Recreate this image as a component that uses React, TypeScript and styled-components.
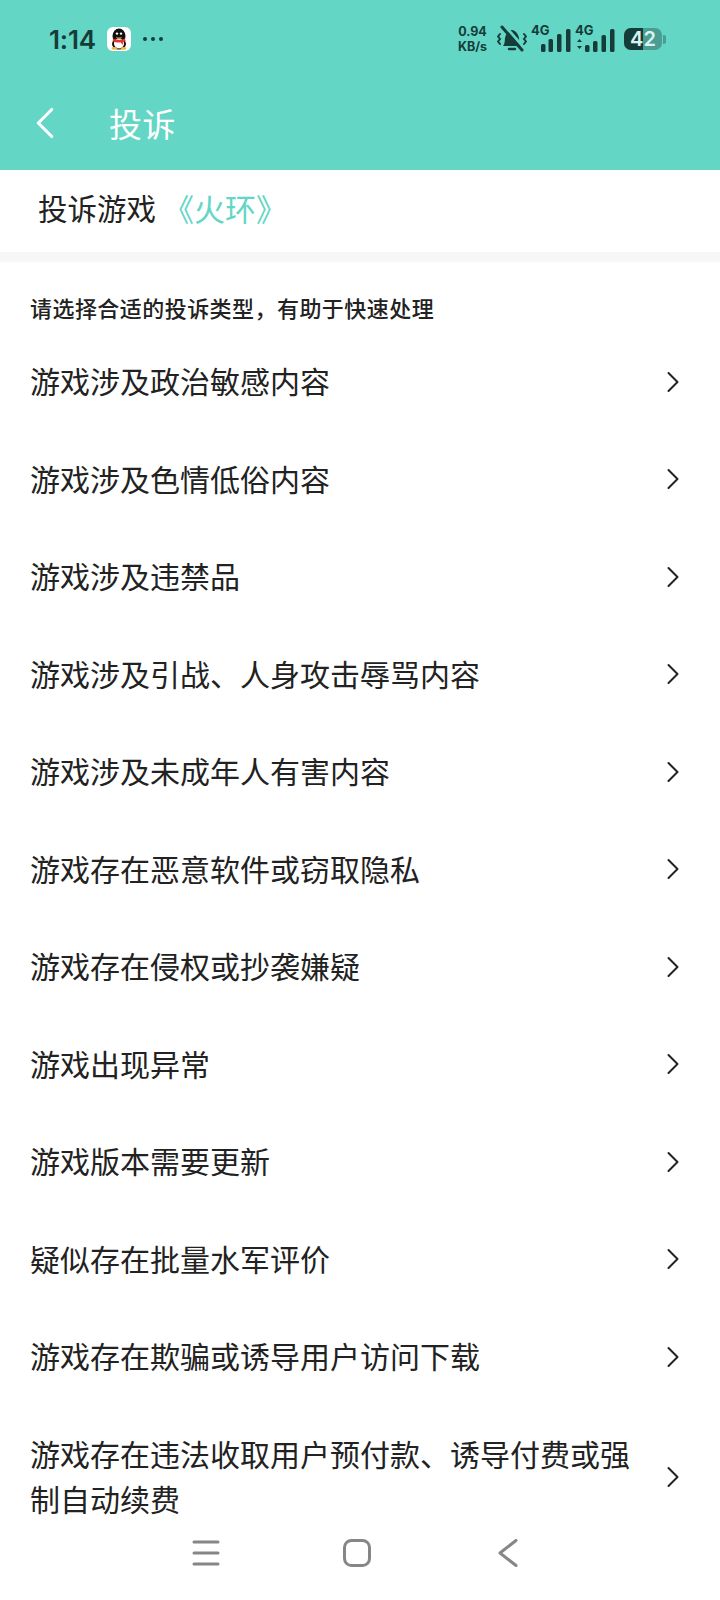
import styled, { createGlobalStyle } from "styled-components";
import { ChevronLeft, ChevronRight } from "lucide-react";

const GlobalStyle = createGlobalStyle`
  html, body {
    margin: 0;
    padding: 0;
    background: #fff;
  }
  * {
    box-sizing: border-box;
  }
`;

const cjk = `"Noto Sans CJK SC", "Noto Sans", sans-serif`;

const Screen = styled.main`
  display: flex;
  flex-direction: column;
  width: 720px;
  height: 1600px;
  overflow: hidden;
  background: #fff;
  font-family: ${cjk};
`;

const Header = styled.header`
  flex: none;
  height: 170px;
  background: #64d6c5;
  color: #fff;
`;

const StatusBar = styled.div`
  display: flex;
  align-items: center;
  justify-content: space-between;
  height: 78px;
  padding: 0 54px 0 49px;
  color: #163c3a;
`;

const StatusLeft = styled.div`
  display: flex;
  align-items: center;
`;

const Clock = styled.span`
  font-family: Inter, sans-serif;
  font-size: 26px;
  font-weight: 600;
  letter-spacing: -0.2px;
  width: 58px;
`;

const AppBadge = styled.span`
  display: flex;
  align-items: center;
  justify-content: center;
  width: 24px;
  height: 24px;
  border-radius: 6px;
  background: #fff;
`;

const Dots = styled.span`
  display: flex;
  gap: 4px;
  margin-left: 12px;
`;

const Dot = styled.i`
  width: 4px;
  height: 4px;
  border-radius: 50%;
  background: #163c3a;
`;

const StatusRight = styled.div`
  display: flex;
  align-items: center;
`;

const Speed = styled.span`
  display: flex;
  flex-direction: column;
  align-items: center;
  width: 31px;
  margin-right: 9px;
  font-family: Inter, sans-serif;
  font-size: 12.5px;
  font-weight: 700;
  line-height: 15px;
  white-space: nowrap;
`;

const Battery = styled.span`
  position: relative;
  display: flex;
  align-items: center;
  justify-content: center;
  width: 38px;
  height: 22px;
  margin-left: 9px;
  border-radius: 7px;
  overflow: hidden;
  background: #4b9c92;
  font-family: Inter, sans-serif;
  font-size: 20px;
  font-weight: 600;
  color: #d8f3ee;
`;

const BatteryFill = styled.i`
  position: absolute;
  left: 0;
  top: 0;
  bottom: 0;
  background: #163c3a;
`;

const BatteryLabel = styled.span`
  position: relative;
`;

const BatteryCap = styled.i`
  width: 3px;
  height: 9px;
  margin-left: 1px;
  border-radius: 0 2px 2px 0;
  background: #4b9c92;
`;

const TitleBar = styled.div`
  display: flex;
  align-items: center;
  height: 92px;
  padding: 0 0 2px 18px;
`;

const BackButton = styled.span`
  display: flex;
  width: 91px;
`;

const Title = styled.h1`
  margin: 0;
  font-size: 33px;
  font-weight: 400;
  letter-spacing: 0.5px;
`;

const GameRow = styled.div`
  flex: none;
  display: flex;
  align-items: center;
  height: 92px;
  padding: 0 0 8px 38px;
  border-bottom: 10px solid #f7f7f7;
  font-size: 29.5px;
  color: #222;
`;

const GameName = styled.span`
  margin-left: 7px;
  font-size: 31px;
  color: #64d6c5;
`;

const Hint = styled.p`
  flex: none;
  margin: 0;
  padding: 30px 30px 0;
  font-size: 22px;
  line-height: 30px;
  font-weight: 500;
  letter-spacing: 0.45px;
  color: #222;
`;

const List = styled.ul`
  flex: 1;
  min-height: 0;
  margin: 0;
  padding: 10px 0 0;
  list-style: none;
`;

const Item = styled.li`
  display: flex;
  align-items: center;
  justify-content: space-between;
  padding: 26.25px 29px 26.25px 30px;
  font-size: 30px;
  line-height: 45px;
  color: #222;
`;

const ItemText = styled.span`
  max-width: 600px;
`;

const ItemArrow = styled(ChevronRight)`
  flex: none;
  margin-top: 2px;
  color: #222;
`;

const NavBar = styled.nav`
  flex: none;
  display: flex;
  align-items: center;
  justify-content: center;
  gap: 123px;
  height: 94px;
  padding-right: 6px;
  color: #868686;
`;

const items = [
  "游戏涉及政治敏感内容",
  "游戏涉及色情低俗内容",
  "游戏涉及违禁品",
  "游戏涉及引战、人身攻击辱骂内容",
  "游戏涉及未成年人有害内容",
  "游戏存在恶意软件或窃取隐私",
  "游戏存在侵权或抄袭嫌疑",
  "游戏出现异常",
  "游戏版本需要更新",
  "疑似存在批量水军评价",
  "游戏存在欺骗或诱导用户访问下载",
  "游戏存在违法收取用户预付款、诱导付费或强制自动续费",
];

const QqIcon = () => (
  <svg width="20" height="22" viewBox="0 0 20 22">
    <ellipse cx="10" cy="8" rx="6.5" ry="7.5" fill="#111" />
    <ellipse cx="10" cy="16" rx="7" ry="5.5" fill="#111" />
    <ellipse cx="10" cy="15.5" rx="5" ry="5" fill="#fff" />
    <path d="M4 10.5c4 1.6 8 1.6 12 0l.6 2.4-2.6 1-.2 3-2.400-2.600c-2.600.5-5 .2-7.600-1z" fill="#e3352b" />
    <path d="M7 9c2 .8 4 .8 6 0l-1 1.400H8z" fill="#f2b632" />
    <circle cx="8" cy="5.600" r="1.200" fill="#fff" />
    <circle cx="12" cy="5.600" r="1.200" fill="#fff" />
    <ellipse cx="5.500" cy="20.400" rx="3" ry="1.300" fill="#f2b632" />
    <ellipse cx="14.500" cy="20.400" rx="3" ry="1.300" fill="#f2b632" />
  </svg>
);

const MutedBell = () => (
  <svg width="30" height="28" viewBox="0 0 30 28" fill="none" stroke="currentColor" strokeLinecap="round">
    <path d="M6 21c2-2 1.600-5 2-8 .6-4 4-8 7-8s6.400 4 7 8c.4 3 0 6 2 8z" fill="currentColor" stroke="none" />
    <path d="M12 24h6" strokeWidth="2.400" />
    <path d="M7 0l21 24" stroke="#64d6c5" strokeWidth="3" />
    <path d="M5 2l20 23" strokeWidth="3" />
    <path d="M3 9 1 11.500 3 14 1 16.500 3 19" strokeWidth="2" />
    <path d="M27 9 29 11.500 27 14 29 16.500 27 19" strokeWidth="2" />
  </svg>
);

const SignalBars = styled.svg`
  flex: none;
  margin-left: 4px;
`;

const Signal = ({ arrows }: { arrows?: boolean }) => (
  <SignalBars width="40" height="34" viewBox="0 -3 40 34" fill="currentColor">
    <text x="0" y="10" fontFamily="Inter, sans-serif" fontSize="13" fontWeight="700">4G</text>
    {arrows ? (
      <>
        <path d="M2 17l2.500-3 2.500 3zM2 21l2.500 3 2.500-3z" />
        <rect x="10" y="20" width="4.500" height="7" rx="1.500" />
        <rect x="18" y="16" width="4.500" height="11" rx="1.500" />
        <rect x="26.500" y="10" width="4.500" height="17" rx="1.500" />
        <rect x="35" y="4" width="4.500" height="23" rx="1.500" />
      </>
    ) : (
      <>
        <rect x="10" y="19" width="4.500" height="8" rx="1.500" />
        <rect x="17.500" y="14" width="4.500" height="13" rx="1.500" />
        <rect x="26" y="9" width="4.500" height="18" rx="1.500" />
        <rect x="35" y="4" width="4.500" height="23" rx="1.500" />
      </>
    )}
  </SignalBars>
);

const NavMenu = () => (
  <svg width="28" height="28" viewBox="0 0 28 28" stroke="currentColor" strokeWidth="3" strokeLinecap="round">
    <path d="M2 3h24M2 14h24M2 25h24" />
  </svg>
);

const NavHome = () => (
  <svg width="28" height="28" viewBox="0 0 28 28" fill="none" stroke="currentColor" strokeWidth="3">
    <rect x="1.500" y="1.500" width="25" height="25" rx="7" />
  </svg>
);

const NavBack = () => (
  <svg width="28" height="28" viewBox="0 0 28 28" fill="none" stroke="currentColor" strokeWidth="3" strokeLinecap="round" strokeLinejoin="round">
    <path d="M22 1.500 6 14l16 12.500" />
  </svg>
);

const App = () => {
  return (
    <>
      <GlobalStyle />
      <Screen>
        <Header>
          <StatusBar>
            <StatusLeft>
              <Clock>1:14</Clock>
              <AppBadge>
                <QqIcon />
              </AppBadge>
              <Dots>
                <Dot />
                <Dot />
                <Dot />
              </Dots>
            </StatusLeft>
            <StatusRight>
              <Speed>
                <span>0.94</span>
                <span>KB/s</span>
              </Speed>
              <MutedBell />
              <Signal />
              <Signal arrows />
              <Battery>
                <BatteryFill style={{ width: "50%" }} />
                <BatteryLabel>42</BatteryLabel>
              </Battery>
              <BatteryCap />
            </StatusRight>
          </StatusBar>
          <TitleBar>
            <BackButton>
              <ChevronLeft size={54} strokeWidth={1.4} />
            </BackButton>
            <Title>投诉</Title>
          </TitleBar>
        </Header>
        <GameRow>
          投诉游戏
          <GameName>《火环》</GameName>
        </GameRow>
        <Hint>请选择合适的投诉类型，有助于快速处理</Hint>
        <List>
          {items.map((item) => (
            <Item key={item}>
              <ItemText>{item}</ItemText>
              <ItemArrow size={36} strokeWidth={1.35} />
            </Item>
          ))}
        </List>
        <NavBar>
          <NavMenu />
          <NavHome />
          <NavBack />
        </NavBar>
      </Screen>
    </>
  );
};

export default App;
